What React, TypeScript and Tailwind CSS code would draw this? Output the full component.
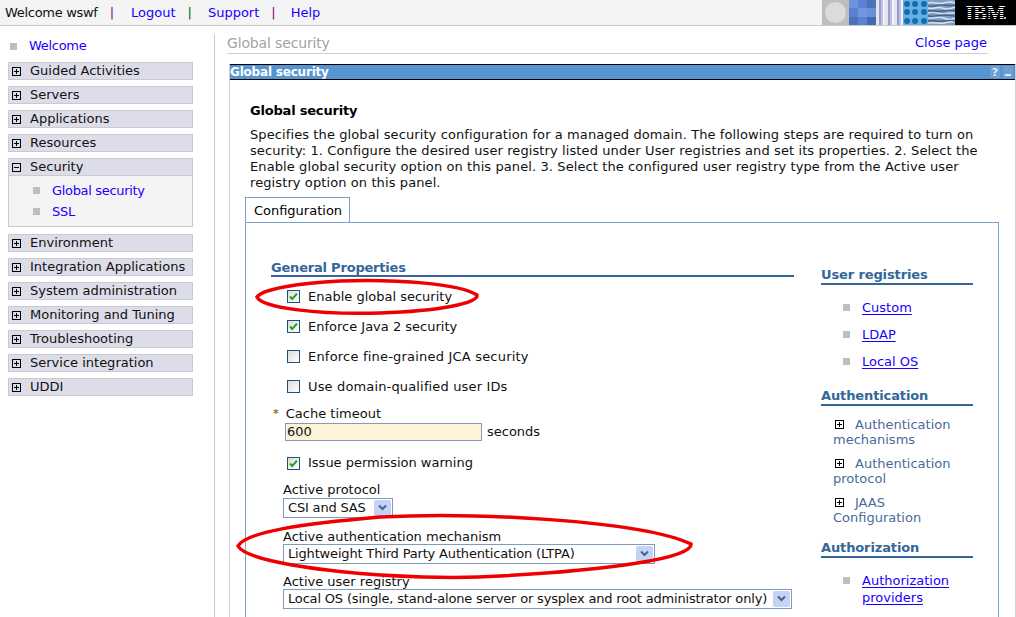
import type { ReactNode } from 'react';

const NAV_TOP = ['Guided Activities', 'Servers', 'Applications', 'Resources'];
const NAV_BOTTOM = [
  'Environment',
  'Integration Applications',
  'System administration',
  'Monitoring and Tuning',
  'Troubleshooting',
  'Service integration',
  'UDDI',
];

function PlusBox({ minus = false }: { minus?: boolean }) {
  return (
    <svg width="9" height="9" viewBox="0 0 9 9" className="shrink-0">
      <rect x="0.5" y="0.5" width="8" height="8" fill="none" stroke="#000" />
      <path d={minus ? 'M2 4.5h5' : 'M2 4.5h5M4.5 2v5'} stroke="#000" />
    </svg>
  );
}

function Bullet() {
  return <span className="block h-[7px] w-[7px] shrink-0 bg-[#bdbdc4]" />;
}

function NavRow({ label, minus = false }: { label: string; minus?: boolean }) {
  return (
    <div className="flex h-[18px] items-center gap-[9px] border border-[#c9c9cf] bg-[#dddde9] pl-[3px] text-[13px] text-[#111]">
      <PlusBox minus={minus} />
      <span>{label}</span>
    </div>
  );
}

function CheckRow({ label, checked, className }: { label: string; checked: boolean; className?: string }) {
  return (
    <div className={`flex h-[15px] items-center gap-[8px] text-[13px] text-[#111] ${className ?? ''}`}>
      <span className="block h-[13px] w-[13px] border border-[#1c5180] bg-gradient-to-br from-[#dcdcd6] to-white">
        {checked ? (
          <svg width="11" height="11" viewBox="0 0 11 11">
            <path d="M2 5.5l2.2 2.4L9 2.6" fill="none" stroke="#21a121" strokeWidth="2" />
          </svg>
        ) : null}
      </span>
      <span>{label}</span>
    </div>
  );
}

function Select({ value, width, className }: { value: string; width: string; className?: string }) {
  return (
    <div className={`flex h-[20px] items-center justify-between border border-[#7f9db9] bg-white pl-[4px] pr-[1px] text-[13px] text-[#111] ${width} ${className ?? ''}`}>
      <span className="whitespace-nowrap tracking-[-0.17px]">{value}</span>
      <span className="flex h-[16px] w-[17px] shrink-0 items-center justify-center rounded-[2px] bg-[#c3d3f6]">
        <svg width="9" height="7" viewBox="0 0 9 7">
          <path d="M1 1.5l3.5 3.5L8 1.5" fill="none" stroke="#4d6185" strokeWidth="2" />
        </svg>
      </span>
    </div>
  );
}

function SideHeading({ children, className }: { children: ReactNode; className?: string }) {
  return (
    <div className={`border-b-2 border-[#336699] pb-[1px] text-[13px] font-bold leading-[15px] tracking-[-0.12px] text-[#336699] ${className ?? ''}`}>
      {children}
    </div>
  );
}

function SideLink({ children, className }: { children: ReactNode; className?: string }) {
  return (
    <div className={`flex items-start gap-[12px] pl-[22px] text-[13px] leading-[17px] ${className ?? ''}`}>
      <span className="mt-[5px]">
        <Bullet />
      </span>
      <span className="text-[#1a00ff] underline underline-offset-2">{children}</span>
    </div>
  );
}

function TreeLink({ first, second, className }: { first: string; second: string; className?: string }) {
  return (
    <div className={`pl-[12px] text-[13px] leading-[15px] text-[#4a6a9c] ${className ?? ''}`}>
      <div className="flex items-center gap-[11px] pl-[2px]">
        <PlusBox />
        <span>{first}</span>
      </div>
      <div>{second}</div>
    </div>
  );
}

function HeaderArt() {
  return (
    <div className="flex h-[25px] w-[194px] shrink-0">
      <div className="flex h-full w-[27px] items-center justify-center bg-[#bebebe]">
        <span className="block h-[21px] w-[21px] rounded-full bg-[#dcdada]" />
      </div>
      <div className="grid h-full w-[27px] grid-cols-3 grid-rows-3">
        {['#6f93dc', '#5a82d2', '#4d72b8', '#5a82d2', '#7396de', '#6a8ed8', '#4d72b8', '#5a82d2', '#4668ae'].map((c, i) => (
          <span key={i} style={{ backgroundColor: c }} />
        ))}
      </div>
      <div className="h-full w-[27px] bg-[repeating-linear-gradient(90deg,#e4e4f0_0px,#e4e4f0_3px,#9c9cd4_3px,#9c9cd4_5px,#c0c0e4_5px,#c0c0e4_7px,#f2f2f8_7px,#f2f2f8_9px)]" />
      <div className="grid h-full w-[25px] grid-cols-3 grid-rows-3 place-items-center bg-[#62b0e6]">
        {Array.from({ length: 9 }).map((_, i) => (
          <span key={i} className="block h-[6px] w-[6px] rounded-full bg-[#1a6ca8]" />
        ))}
      </div>
      <svg width="27" height="25" viewBox="0 0 27 25" className="shrink-0">
        <rect width="27" height="25" fill="#7f9cc0" />
        <path d="M0 3c6-2 10 2 16 0s8-1 11 0M0 8c5 2 9-2 14 0s9 1 13-1M0 13c7-2 10 1 15 1s8-2 12-1M0 18c5 1 9-2 15 0s8 2 12 0M0 23c6-1 11 1 16 0s8-2 11-1" fill="none" stroke="#d8e2ee" strokeWidth="1.4" />
        <path d="M0 6c6 1 11-2 17-1s7 1 10 0M0 11c5-1 9 1 15 0s9-1 12 0M0 16c6 1 10-1 16-1s8 1 11 1M0 21c5-1 10 1 16 0s8-1 11 0" fill="none" stroke="#41618e" strokeWidth="1.4" />
      </svg>
      <div className="relative flex h-full flex-1 items-center justify-center bg-black">
        <span className="font-['Liberation_Serif',serif] text-[20px] font-bold leading-none text-white">IBM</span>
        <span className="absolute inset-0 bg-[repeating-linear-gradient(0deg,transparent_0px,transparent_1px,#000_1px,#000_2px)]" />
        <span className="absolute right-[10px] top-[17px] block h-[2px] w-[2px] bg-[#bbb]" />
      </div>
    </div>
  );
}

export default function App() {
  return (
    <div className="relative h-[617px] w-full overflow-hidden bg-white font-['DejaVu_Sans',sans-serif] text-[13px]">
      {/* top bar */}
      <header className="flex h-[26px] items-center justify-between border-b border-[#c8c8c8] bg-[#f4f4f4]">
        <div className="flex items-center pl-[5px] text-[13px] text-[#111]">
          <span className="tracking-[-0.3px]">Welcome wswf</span>
          <span className="ml-[12px] text-[#800080]">|</span>
          <span className="ml-[17px] text-[#1a00ff]">Logout</span>
          <span className="ml-[12px] text-[#006400]">|</span>
          <span className="ml-[16px] text-[#1a00ff]">Support</span>
          <span className="ml-[12px] text-[#800080]">|</span>
          <span className="ml-[15px] text-[#1a00ff]">Help</span>
        </div>
        <HeaderArt />
      </header>

      <div className="flex h-[591px]">
        {/* navigation */}
        <nav className="w-[214px] shrink-0 pl-[8px] pt-[11px]">
          <div className="w-[185px]">
            <div className="flex h-[18px] items-center gap-[12px] pl-[2px] text-[#1a00ff]">
              <Bullet />
              <span className="tracking-[-0.3px]">Welcome</span>
            </div>
            <div className="mt-[7px] flex flex-col gap-[6px]">
              {NAV_TOP.map((label) => (
                <NavRow key={label} label={label} />
              ))}
              <div>
                <NavRow label="Security" minus />
                <div className="flex h-[51px] flex-col gap-[4px] border border-t-0 border-[#c9c9cf] bg-[#f4f4f4] pl-[24px] pt-[6px] text-[#1a00ff]">
                  <div className="flex h-[17px] items-center gap-[12px]">
                    <Bullet />
                    <span className="tracking-[-0.33px]">Global security</span>
                  </div>
                  <div className="flex h-[17px] items-center gap-[12px]">
                    <Bullet />
                    <span className="tracking-[-0.3px]">SSL</span>
                  </div>
                </div>
              </div>
            </div>
            <div className="mt-[7px] flex flex-col gap-[6px]">
              {NAV_BOTTOM.map((label) => (
                <NavRow key={label} label={label} />
              ))}
            </div>
          </div>
        </nav>

        {/* main */}
        <main className="mt-[8px] min-w-0 flex-1 border-l border-[#c8c8c8] pl-[12px]">
          <div className="mr-[28px] flex h-[20px] items-start justify-between border-b border-[#cfcfcf]">
            <span className="text-[14px] leading-[18px] tracking-[-0.15px] text-[#a3a3a3]">Global security</span>
            <span className="-translate-x-px leading-[18px] text-[#1a00ff]">Close page</span>
          </div>

          <div className="ml-[2px] mt-[10px] h-[600px] border-x border-[#d0d0d0]">
            <div className="flex h-[16px] items-center justify-between border-y border-black bg-[#5595d3] pr-[2px]">
              <span className="text-[12px] font-bold leading-none tracking-[-0.2px] text-white">Global security</span>
              <span className="flex gap-[3px]">
                <span className="flex h-[12px] w-[10px] items-center justify-center bg-[#6f9fd0] text-[11px] font-bold leading-none text-[#dbe8f5]">?</span>
                <span className="flex h-[12px] w-[10px] items-end justify-center bg-[#6f9fd0] pb-[2px]">
                  <span className="block h-[2px] w-[6px] bg-[#dbe8f5]" />
                </span>
              </span>
            </div>

            <div className="pl-[20px] pr-[16px]">
              <h2 className="mt-[23px] text-[13px] font-bold leading-[16px] tracking-[-0.2px] text-black">Global security</h2>
              <p className="mt-[8px] text-[13px] leading-[16px] tracking-[0.1px] text-[#111]">
                Specifies the global security configuration for a managed domain. The following steps are required to turn on security: 1. Configure the desired user registry listed under User registries and set its properties. 2. Select the Enable global security option on this panel. 3. Select the configured user registry type from the Active user registry option on this panel.
              </p>

              <div className="-ml-[5px] mt-[6px] flex h-[26px] items-end">
                <div className="flex h-[26px] w-[105px] items-center justify-center border border-b-0 border-[#7f9fd0] bg-white pl-[1px]">Configuration</div>
              </div>
              <div className="-ml-[5px] flex h-[420px] w-[754px] -translate-y-px border border-[#7f9fd0] pl-[25px] pt-[36px]">
                <section className="w-[523px] shrink-0">
                  <div className="mt-[1px] border-b-2 border-[#336699] text-[13px] font-bold leading-[15px] tracking-[-0.2px] text-[#336699]">General Properties</div>
                  <CheckRow className="ml-[16px] mt-[12px]" label="Enable global security" checked />
                  <CheckRow className="ml-[16px] mt-[15px]" label="Enforce Java 2 security" checked />
                  <CheckRow className="ml-[16px] mt-[15px] tracking-[0.2px]" label="Enforce fine-grained JCA security" checked={false} />
                  <CheckRow className="ml-[16px] mt-[15px] tracking-[0.15px]" label="Use domain-qualified user IDs" checked={false} />
                  <div className="ml-[2px] mt-[12px] flex h-[16px] items-center gap-[7px] text-[#111]">
                    <span className="text-[11px] font-bold text-[#8a7a2a]">*</span>
                    <span>Cache timeout</span>
                  </div>
                  <div className="ml-[14px] flex items-center gap-[5px] text-[#111]">
                    <span className="block h-[18px] w-[197px] border border-[#7f9db9] bg-[#fdf3d8] pl-[1px] leading-[16px]">600</span>
                    <span>seconds</span>
                  </div>
                  <CheckRow className="ml-[16px] mt-[14px]" label="Issue permission warning" checked />
                  <div className="ml-[12px] mt-[11px] leading-[16px] text-[#111]">Active protocol</div>
                  <Select className="ml-[12px]" value="CSI and SAS" width="w-[110px]" />
                  <div className="ml-[12px] mt-[11px] leading-[15px] text-[#111]">Active authentication mechanism</div>
                  <Select className="ml-[12px]" value="Lightweight Third Party Authentication (LTPA)" width="w-[372px]" />
                  <div className="ml-[12px] mt-[10px] leading-[15px] text-[#111]">Active user registry</div>
                  <Select className="ml-[12px]" value="Local OS (single, stand-alone server or sysplex and root administrator only)" width="w-[509px]" />
                </section>
                <aside className="ml-[27px] w-[152px] shrink-0">
                  <SideHeading className="mt-[8px]">User registries</SideHeading>
                  <SideLink className="mt-[14px]">Custom</SideLink>
                  <SideLink className="mt-[10px]">LDAP</SideLink>
                  <SideLink className="mt-[10px]">Local OS</SideLink>
                  <SideHeading className="mt-[18px]">Authentication</SideHeading>
                  <TreeLink className="mt-[11px]" first="Authentication" second="mechanisms" />
                  <TreeLink className="mt-[9px]" first="Authentication" second="protocol" />
                  <TreeLink className="mt-[9px]" first="JAAS" second="Configuration" />
                  <SideHeading className="mt-[15px]">Authorization</SideHeading>
                  <SideLink className="mt-[14px]">Authorization providers</SideLink>
                </aside>
              </div>
            </div>
          </div>
        </main>
      </div>

      {/* red hand-drawn circles over the form */}
      <svg className="pointer-events-none absolute left-0 top-0" width="1016" height="617">
        <path d="M257 297 C262 289 300 283 340 281 C400 279 460 284 477 295 C479 303 440 311 380 313 C320 315 262 308 257 297 Z" fill="none" stroke="#ee0000" strokeWidth="3.5" />
        <path d="M238 546 C246 532 300 524 380 517 C470 512 640 520 691 544 C693 558 610 570 500 576 C410 582 250 568 238 546 Z" fill="none" stroke="#ee0000" strokeWidth="3.5" />
      </svg>
    </div>
  );
}
